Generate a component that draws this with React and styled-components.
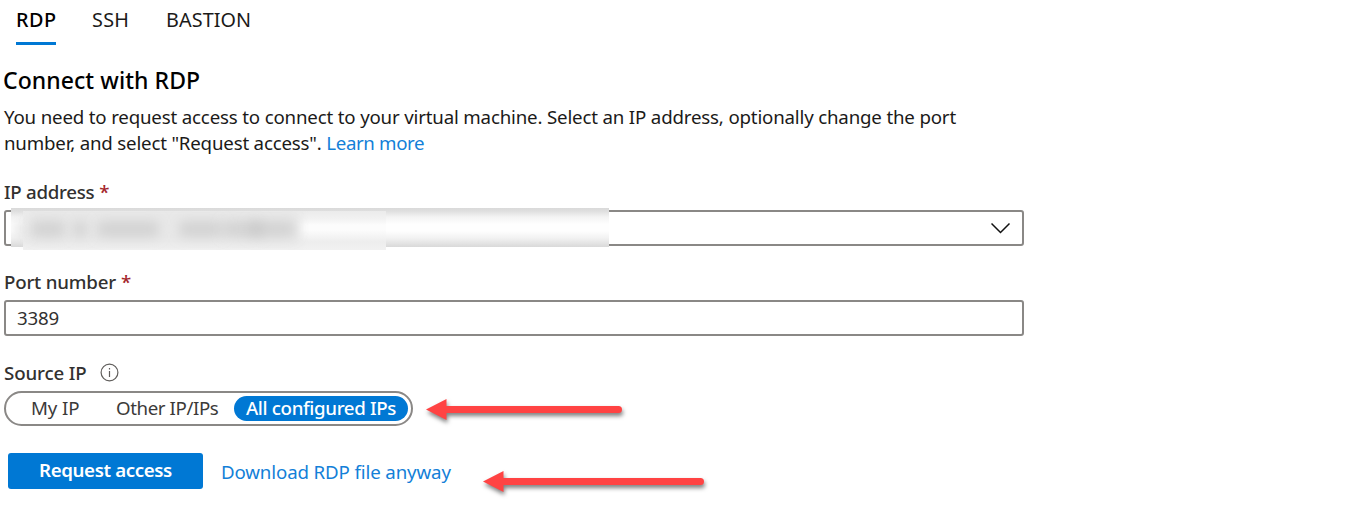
import React from "react";
import styled, { createGlobalStyle } from "styled-components";

const GlobalStyle = createGlobalStyle`
  * { box-sizing: border-box; }
  body {
    margin: 0;
    background: #fff;
    color: #323130;
    font-family: "Noto Sans", "Open Sans", sans-serif;
    font-size: 18.7px;
    line-height: 26px;
  }
`;

const Page = styled.main`
  position: relative;
  height: 529px;
  padding: 0 0 0 4px;
  overflow: hidden;
`;

const Tabs = styled.nav`
  display: flex;
  gap: 36px;
  padding-left: 12px;
`;

const Tab = styled.a`
  height: 45px;
  padding-top: 7px;
  white-space: nowrap;
  width: ${(p) => p.$width}px;
  font-size: 19.8px;
  letter-spacing: ${(p) => p.$track || 0}px;
  color: ${(p) => (p.$active ? "#000" : "#1b1a19")};
  font-weight: ${(p) => (p.$active ? 500 : 400)};
  border-bottom: 3px solid ${(p) => (p.$active ? "#0078d4" : "transparent")};
`;

const Heading = styled.h1`
  margin: 20px 0 9px -1px;
  font-size: 23px;
  line-height: 30px;
  font-weight: 500;
  letter-spacing: 0.06px;
  color: #000;
  white-space: nowrap;
`;

const Intro = styled.p`
  margin: 0 0 23px;
  color: #1b1a19;
  white-space: nowrap;
`;

const Line = styled.span`
  display: block;
  letter-spacing: ${(p) => p.$track || 0}px;
`;

const Link = styled.a`
  color: #1380d8;
  letter-spacing: ${(p) => p.$track || 0}px;
  white-space: nowrap;
`;

const Field = styled.div`
  display: flex;
  flex-direction: column;
  gap: 5px;
  width: ${(p) => (p.$fit ? "409px" : "1020px")};
  margin-bottom: ${(p) => p.$after}px;
`;

const Label = styled.label`
  display: flex;
  align-items: center;
  height: 26px;
  font-weight: 500;
  letter-spacing: ${(p) => p.$track || 0}px;
  white-space: nowrap;
`;

const Required = styled.span`
  margin-left: 5px;
  color: #a4262c;
`;

const Box = styled.div`
  position: relative;
  display: flex;
  align-items: center;
  justify-content: ${(p) => (p.$select ? "flex-end" : "flex-start")};
  height: 36px;
  padding: 0 11px;
  border: 2px solid #8a8886;
  border-radius: 3px;
  letter-spacing: ${(p) => p.$track || 0}px;
`;

const Redaction = styled.div`
  position: absolute;
  top: -4px;
  left: 5px;
  width: 598px;
  height: 39px;
  background: linear-gradient(#dadada 0, #dedede 3px, #f3f3f3 9px, #fefefe 16px, #fefefe 23px, #f2f2f2 30px, #d9d9d9 39px);
`;

const RedactionPatch = styled.div`
  position: absolute;
  top: 3px;
  left: 12px;
  width: 363px;
  height: 39px;
  background: linear-gradient(#ebebeb 0, #f2f2f2 8px, #fcfcfc 14px, #fcfcfc 19px, #ededed 31px, #f1f1f1 39px);
`;

const Smudges = styled.svg`
  position: absolute;
  top: 3px;
  left: 0;
  width: 598px;
  height: 39px;
`;

const Pill = styled.div`
  display: flex;
  align-items: center;
  width: 409px;
  height: 35px;
  padding: 0 3px 0 25px;
  border: 2px solid #8a8886;
  border-radius: 18px;
`;

const Option = styled.span`
  display: flex;
  align-items: center;
  justify-content: ${(p) => (p.$on ? "center" : "flex-start")};
  flex: none;
  width: ${(p) => p.$width}px;
  height: 25px;
  padding-bottom: 2px;
  border-radius: 13px;
  letter-spacing: ${(p) => p.$track || 0}px;
  white-space: nowrap;
  color: ${(p) => (p.$on ? "#fff" : "#3b3a39")};
  background: ${(p) => (p.$on ? "#0078d4" : "transparent")};
  font-weight: ${(p) => (p.$on ? 500 : 400)};
`;

const Actions = styled.div`
  display: flex;
  align-items: center;
  gap: 18px;
  padding-left: 4px;

  ${Link} {
    padding-top: 2px;
  }
`;

const Button = styled.button`
  width: 195px;
  height: 36px;
  padding: 0 0 2px;
  border: 0;
  border-radius: 3px;
  background: #0078d4;
  color: #fff;
  font: 600 18.7px/26px "Noto Sans", "Open Sans", sans-serif;
  letter-spacing: ${(p) => p.$track || 0}px;
  white-space: nowrap;
`;

const ArrowSvg = styled.svg`
  position: absolute;
  left: ${(p) => p.$x}px;
  top: ${(p) => p.$y}px;
  overflow: visible;
  filter: drop-shadow(1px 3px 2px rgba(0, 0, 0, 0.5));
`;

function Arrow({ x, y, length }) {
  return (
    <ArrowSvg $x={x} $y={y} width={length} height="21" fill="#ff4343">
      <path d={`M0 10.5 L20.5 0 V7 H${length - 3.5} a3.5 3.5 0 0 1 0 7 H20.5 V21 Z`} />
    </ArrowSvg>
  );
}

const InfoSvg = styled.svg`
  margin: -1px 0 0 13px;
`;

function Info() {
  return (
    <InfoSvg width="19" height="19" viewBox="0 0 19 19" fill="none" stroke="#605e5c">
      <circle cx="9.5" cy="9.5" r="8.4" strokeWidth="1.2" />
      <path d="M9.5 8v6M9.5 5v1.5" strokeWidth="1.2" />
    </InfoSvg>
  );
}

const smudges = [
  [5, 10], [20, 34], [62, 14], [86, 62], [168, 44], [212, 40], [238, 46],
];

export default function App() {
  return (
    <>
      <GlobalStyle />
      <Page>
        <Tabs>
          <Tab $active $width={40} $track={0.5}>RDP</Tab>
          <Tab $width={38} $track={0.3}>SSH</Tab>
          <Tab $width={86} $track={0.1}>BASTION</Tab>
        </Tabs>
        <Heading>Connect with RDP</Heading>
        <Intro>
          <Line $track={-0.175}>
            You need to request access to connect to your virtual machine. Select an IP address, optionally change the port
          </Line>
          <Line $track={-0.19}>
            number, and select "Request access". <Link $track={-0.36}>Learn more</Link>
          </Line>
        </Intro>
        <Field $after={23}>
          <Label $track={-0.28}>IP address<Required>*</Required></Label>
          <Box $select>
            <svg width="20" height="12" viewBox="0 0 20 12" fill="none" stroke="#111" strokeWidth="1.5">
              <path d="M0.5 1.5 L9.5 10.5 L18.5 1.5" />
            </svg>
            <Redaction>
              <RedactionPatch />
              <Smudges>
                <defs>
                  <filter id="base" x="-10%" y="-100%" width="120%" height="300%">
                    <feGaussianBlur stdDeviation="5" />
                  </filter>
                  <filter id="soft" x="-150%" y="-150%" width="400%" height="400%">
                    <feGaussianBlur stdDeviation="6" />
                  </filter>
                </defs>
                <rect x="16" y="-4" width="274" height="38" fill="#e8e8e8" filter="url(#base)" />
                {smudges.map(([x, w]) => (
                  <rect key={x} x={x} y="10" width={w} height="16" rx="5" fill="#c4c4c4" fillOpacity="0.6" filter="url(#soft)" />
                ))}
              </Smudges>
            </Redaction>
          </Box>
        </Field>
        <Field $after={24}>
          <Label $track={-0.2}>Port number<Required>*</Required></Label>
          <Box $track={-0.2}>3389</Box>
        </Field>
        <Field $fit $after={27}>
          <Label $track={-0.13}>Source IP<Info /></Label>
          <Pill>
            <Option $width={85} $track={-0.1}>My IP</Option>
            <Option $width={118} $track={-0.4}>Other IP/IPs</Option>
            <Option $on $width={174} $track={-0.35}>All configured IPs</Option>
          </Pill>
        </Field>
        <Actions>
          <Button $track={-0.38}>Request access</Button>
          <Link $track={-0.13}>Download RDP file anyway</Link>
        </Actions>
        <Arrow x={426} y={399} length={196} />
        <Arrow x={483} y={471} length={221} />
      </Page>
    </>
  );
}
